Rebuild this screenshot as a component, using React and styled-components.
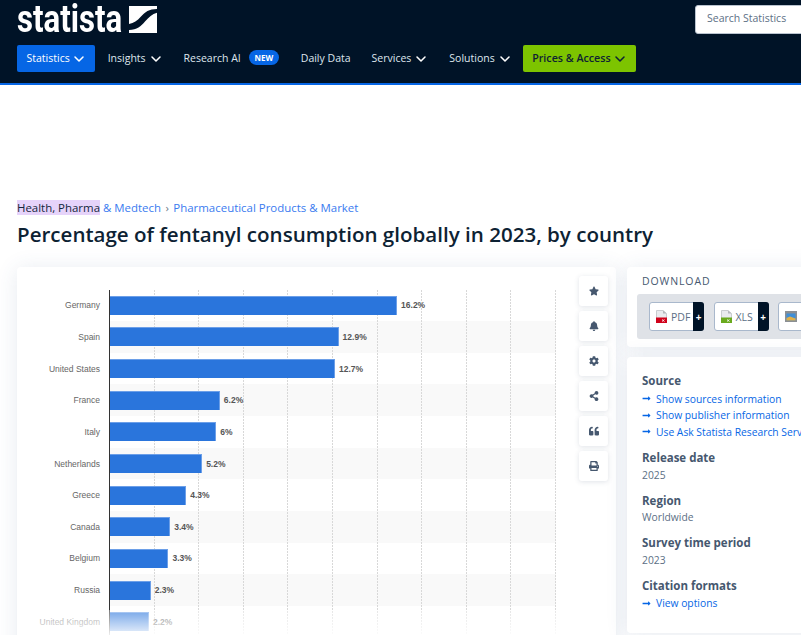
import styled, { createGlobalStyle } from "styled-components";
import { ChevronDown } from "lucide-react";
import { FaStar, FaBell, FaCog, FaShareAlt, FaQuoteLeft, FaPrint, FaLongArrowAltRight } from "react-icons/fa";

const chartData = [
  { country: "Germany", value: 16.2 },
  { country: "Spain", value: 12.9 },
  { country: "United States", value: 12.7 },
  { country: "France", value: 6.2 },
  { country: "Italy", value: 6 },
  { country: "Netherlands", value: 5.2 },
  { country: "Greece", value: 4.3 },
  { country: "Canada", value: 3.4 },
  { country: "Belgium", value: 3.3 },
  { country: "Russia", value: 2.3 },
  { country: "United Kingdom", value: 2.2 },
];

function FileIcon({ color }) {
  return (
    <svg width="11" height="13" viewBox="0 0 11 13">
      <path d="M0.5 0.5H7L10.5 3.5V12.5H0.5Z" fill="#e9ebee" stroke="#c9ccd0" />
      <path d="M7 0.5V3.5H10.5Z" fill="#b5b8bc" />
      <rect x="0" y="7.5" width="11" height="5.5" fill={color} />
      <path d="M6 9.5L8.5 11.5M6 11.500L8.5 9.500" stroke="#fff" strokeWidth="0.8" />
    </svg>
  );
}

function ImageIcon() {
  return (
    <svg width="12" height="11" viewBox="0 0 12 11">
      <rect width="12" height="11" fill="#8b8f94" />
      <rect x="1.5" y="2.5" width="9" height="7" fill="#3f8fd8" />
      <path d="M1.5 9.5V7L5 5.5L10.5 7.5V9.5Z" fill="#e2b04a" />
    </svg>
  );
}

const Chevron = () => <ChevronDown size={16} strokeWidth={2.3} />;

export default function App() {
  return (
    <Page>
      <GlobalStyle />
      <Header>
        <TopRow>
          <Logo>
            <LogoText>statista</LogoText>
            <svg width="28" height="27" viewBox="0 0 28 27">
              <path d="M0 0H28V3C20 3 16 6 12 10.500C8 15 5 17 0 18Z" fill="#fff" />
              <path d="M28 6.700V27H0V24C8 24 12 20 16 15.500C20 11 23 8 28 6.700Z" fill="#fff" />
            </svg>
          </Logo>
          <SearchBox>Search Statistics</SearchBox>
        </TopRow>
        <Nav>
          <NavButton $bg="#0666e5" $color="#fff" $right={8}>Statistics <Chevron /></NavButton>
          <NavLink $gap={13}>Insights <Chevron /></NavLink>
          <NavLink $gap={20}>Research AI <NewBadge>NEW</NewBadge></NavLink>
          <NavLink $gap={22}>Daily Data</NavLink>
          <NavLink $gap={21}>Services <Chevron /></NavLink>
          <NavLink $gap={20}>Solutions <Chevron /></NavLink>
          <NavButton $bg="#7dc400" $color="#0d2233" $gap={10} $right={8} $size={10.7}>Prices &amp; Access <Chevron /></NavButton>
        </Nav>
      </Header>
      <Main>
        <Breadcrumb>
          <Highlight>Health, Pharma</Highlight> &amp; Medtech <Sep>›</Sep> Pharmaceutical Products &amp; Market
        </Breadcrumb>
        <Title>Percentage of fentanyl consumption globally in 2023, by country</Title>
        <Columns>
          <ChartCard>
            <Plot>
              <Grid />
              {chartData.map((d, i) => (
                <Row key={d.country}>
                  <CountryLabel>{d.country}</CountryLabel>
                  <Bars $striped={i % 2 === 1}>
                    <Bar style={{ width: d.value * 17.72 }} />
                    <ValueLabel>{d.value}%</ValueLabel>
                  </Bars>
                </Row>
              ))}
              <Fade />
            </Plot>
            <Toolbar>
              <ToolButton><FaStar /></ToolButton>
              <ToolButton><FaBell /></ToolButton>
              <ToolButton><FaCog /></ToolButton>
              <ToolButton><FaShareAlt /></ToolButton>
              <ToolButton><FaQuoteLeft /></ToolButton>
              <ToolButton><FaPrint /></ToolButton>
            </Toolbar>
          </ChartCard>
          <Side>
            <DownloadCard>
              <DownloadTitle>DOWNLOAD</DownloadTitle>
              <Tray>
                <FileButton><FileIcon color="#d0021b" /><span>PDF</span><Plus>+</Plus></FileButton>
                <FileButton><FileIcon color="#6aaa1e" /><span>XLS</span><Plus>+</Plus></FileButton>
                <FileButton><ImageIcon /><span>PNG</span><Plus>+</Plus></FileButton>
              </Tray>
            </DownloadCard>
            <InfoCard>
              <InfoHeading>Source</InfoHeading>
              <InfoLink $first><FaLongArrowAltRight />Show sources information</InfoLink>
              <InfoLink><FaLongArrowAltRight />Show publisher information</InfoLink>
              <InfoLink><FaLongArrowAltRight />Use Ask Statista Research Service</InfoLink>
              <InfoHeading $spaced>Release date</InfoHeading>
              <InfoText>2025</InfoText>
              <InfoHeading $spaced>Region</InfoHeading>
              <InfoText>Worldwide</InfoText>
              <InfoHeading $spaced>Survey time period</InfoHeading>
              <InfoText>2023</InfoText>
              <InfoHeading $spaced>Citation formats</InfoHeading>
              <InfoLink $first><FaLongArrowAltRight />View options</InfoLink>
            </InfoCard>
          </Side>
        </Columns>
      </Main>
    </Page>
  );
}

const GlobalStyle = createGlobalStyle`
  html, body {
    margin: 0;
    padding: 0;
    overflow: hidden;
  }
`;

const Page = styled.div`
  width: 801px;
  height: 635px;
  overflow: hidden;
  font-family: "Open Sans", sans-serif;
  background: #fff;
`;

const Header = styled.header`
  height: 78px;
  background: #001327;
  border-bottom: 2px solid #0666e5;
  padding: 5px 0 0 17px;
`;

const TopRow = styled.div`
  display: flex;
  justify-content: space-between;
  height: 40px;
`;

const Logo = styled.div`
  display: flex;
  align-items: center;
  gap: 7px;
  height: 29px;
`;

const LogoText = styled.span`
  font-family: "Roboto", sans-serif;
  font-weight: 700;
  font-size: 38px;
  color: #fff;
  line-height: 29px;
  display: inline-block;
  margin-right: -23px;
  transform: scaleX(0.82);
  transform-origin: left center;
  white-space: nowrap;
`;

const SearchBox = styled.div`
  width: 140px;
  height: 29px;
  box-sizing: border-box;
  background: #fff;
  border: 1px solid #b9c3cf;
  border-radius: 3px;
  color: #5c6f85;
  font-size: 10.5px;
  line-height: 25px;
  padding-left: 11px;
  margin-right: -34px;
  flex: none;
`;

const Nav = styled.nav`
  display: flex;
  align-items: center;
  height: 27px;
`;

const NavButton = styled.div`
  display: flex;
  align-items: center;
  gap: 1px;
  height: 27px;
  padding: 0 ${(p) => p.$right}px 2px 9.500px;
  box-sizing: border-box;
  margin-left: ${(p) => p.$gap || 0}px;
  border-radius: 2px;
  background: ${(p) => p.$bg};
  color: ${(p) => p.$color};
  font-size: ${(p) => p.$size || 10.5}px;
  font-weight: ${(p) => (p.$color === "#fff" ? 400 : 600)};
  white-space: nowrap;
  svg { margin-top: 2px; }
`;

const NavLink = styled.div`
  display: flex;
  align-items: center;
  gap: 2px;
  margin-left: ${(p) => p.$gap}px;
  padding-bottom: 2px;
  color: #dfe6ee;
  font-size: 10.5px;
  white-space: nowrap;
  svg { color: #fff; margin-top: 2px; }
`;

const NewBadge = styled.span`
  background: #0666e5;
  color: #fff;
  border-radius: 8px;
  font-size: 8px;
  font-weight: 700;
  line-height: 15px;
  width: 30px;
  text-align: center;
  margin-left: 6px;
`;

const Main = styled.main`
  padding: 115px 0 0 17px;
`;

const Breadcrumb = styled.div`
  color: #3a7bf0;
  font-size: 11.45px;
  line-height: 15px;
`;

const Highlight = styled.span`
  background: #e6d3fa;
  color: #12263a;
`;

const Sep = styled.span`
  color: #6d7c8c;
  margin: 0 1.500px;
`;

const Title = styled.h1`
  margin: 5px 0 0;
  color: #0d2233;
  font-size: 20.55px;
  font-weight: 600;
  line-height: 28px;
  white-space: nowrap;
`;

const Columns = styled.div`
  display: flex;
  gap: 11px;
  margin-top: 19px;
`;

const ChartCard = styled.section`
  width: 599px;
  height: 400px;
  flex: none;
  display: flex;
  background: #fff;
  border-radius: 4px;
  box-shadow: 0 2px 22px rgba(50, 80, 130, 0.12);
  box-sizing: border-box;
  padding-top: 22.500px;
`;

const Plot = styled.div`
  position: relative;
  width: 539px;
  height: 349px;
  flex: none;
`;

const Grid = styled.div`
  position: absolute;
  left: 93px;
  top: 0;
  right: 0;
  bottom: 0;
  background: repeating-linear-gradient(to right, transparent 0 43.6px, #d8d8d8 43.6px 44.6px);
  mask-image: repeating-linear-gradient(to bottom, #000 0 2px, transparent 2px 3px);
`;

const Row = styled.div`
  display: flex;
  height: 31.65px;
`;

const CountryLabel = styled.span`
  width: 83px;
  margin-right: 9px;
  align-self: center;
  text-align: right;
  font-family: "Liberation Sans", sans-serif;
  font-size: 8.500px;
  color: #666;
  white-space: nowrap;
`;

const Bars = styled.div`
  flex: 1;
  display: flex;
  align-items: center;
  border-left: 1px solid #333;
  background: ${(p) => (p.$striped ? "#f9f9f9" : "transparent")};
`;

const Bar = styled.div`
  position: relative;
  height: 19px;
  box-sizing: border-box;
  background: #2a75dc;
  border-top: 1px solid #6c9fe8;
  border-right: 1px solid #6c9fe8;
  flex: none;
`;

const ValueLabel = styled.span`
  position: relative;
  margin-left: 4px;
  font-family: "Liberation Sans", sans-serif;
  font-size: 8.500px;
  font-weight: 700;
  color: #555;
`;

const Fade = styled.div`
  position: absolute;
  left: 0;
  right: 0;
  bottom: 0;
  height: 29px;
  background: linear-gradient(rgba(255, 255, 255, 0.35), #fff);
`;

const Toolbar = styled.div`
  display: flex;
  flex-direction: column;
  gap: 5.500px;
  margin: -13.500px 0 0 23px;
`;

const ToolButton = styled.div`
  width: 29px;
  height: 29.500px;
  display: flex;
  align-items: center;
  justify-content: center;
  background: #fff;
  border-radius: 3px;
  box-shadow: 0 1px 5px rgba(60, 80, 110, 0.16);
  color: #46586f;
  font-size: 10px;
`;

const Side = styled.aside`
  display: flex;
  flex-direction: column;
  gap: 10px;
  width: 260px;
  flex: none;
`;

const DownloadCard = styled.section`
  height: 80px;
  box-sizing: border-box;
  background: #fff;
  border-radius: 4px;
  box-shadow: 0 2px 22px rgba(50, 80, 130, 0.12);
  padding: 7px 10px 0;
`;

const DownloadTitle = styled.div`
  margin-left: 5px;
  color: #46586f;
  font-size: 10.500px;
  font-weight: 500;
  letter-spacing: 0.9px;
  line-height: 14px;
`;

const Tray = styled.div`
  display: flex;
  gap: 9.500px;
  margin-top: 6px;
  height: 45px;
  padding: 8px 12px;
  box-sizing: border-box;
  background: #dfe2e7;
  border-radius: 3px;
`;

const FileButton = styled.div`
  position: relative;
  width: 55px;
  height: 29px;
  flex: none;
  display: flex;
  align-items: center;
  gap: 4px;
  box-sizing: border-box;
  padding-left: 6px;
  background: #fff;
  border: 1px solid #a9b8cc;
  border-radius: 3px;
  color: #5c6f85;
  font-size: 10.500px;
  font-weight: 500;
`;

const Plus = styled.span`
  position: absolute;
  right: -1px;
  top: -1px;
  bottom: -1px;
  width: 11px;
  display: flex;
  align-items: center;
  justify-content: center;
  background: #001327;
  border-radius: 0 3px 3px 0;
  color: #fff;
  font-size: 10px;
  font-weight: 700;
`;

const InfoCard = styled.section`
  height: 276px;
  box-sizing: border-box;
  background: #fff;
  border-radius: 4px;
  box-shadow: 0 2px 22px rgba(50, 80, 130, 0.12);
  padding: 16px 15px 0;
`;

const InfoHeading = styled.h3`
  margin: ${(p) => (p.$spaced ? "10px" : "0")} 0 0;
  color: #46586f;
  font-size: 11.500px;
  font-weight: 700;
  line-height: 16px;
`;

const InfoLink = styled.div`
  display: flex;
  align-items: center;
  gap: 5px;
  height: 16.500px;
  margin-top: ${(p) => (p.$first ? "1.500px" : "0")};
  color: #0666e5;
  font-size: 10.300px;
  white-space: nowrap;
  svg { font-size: 9px; flex: none; }
`;

const InfoText = styled.div`
  margin-top: 1.500px;
  color: #5c6f85;
  font-size: 10.300px;
  line-height: 15px;
`;
